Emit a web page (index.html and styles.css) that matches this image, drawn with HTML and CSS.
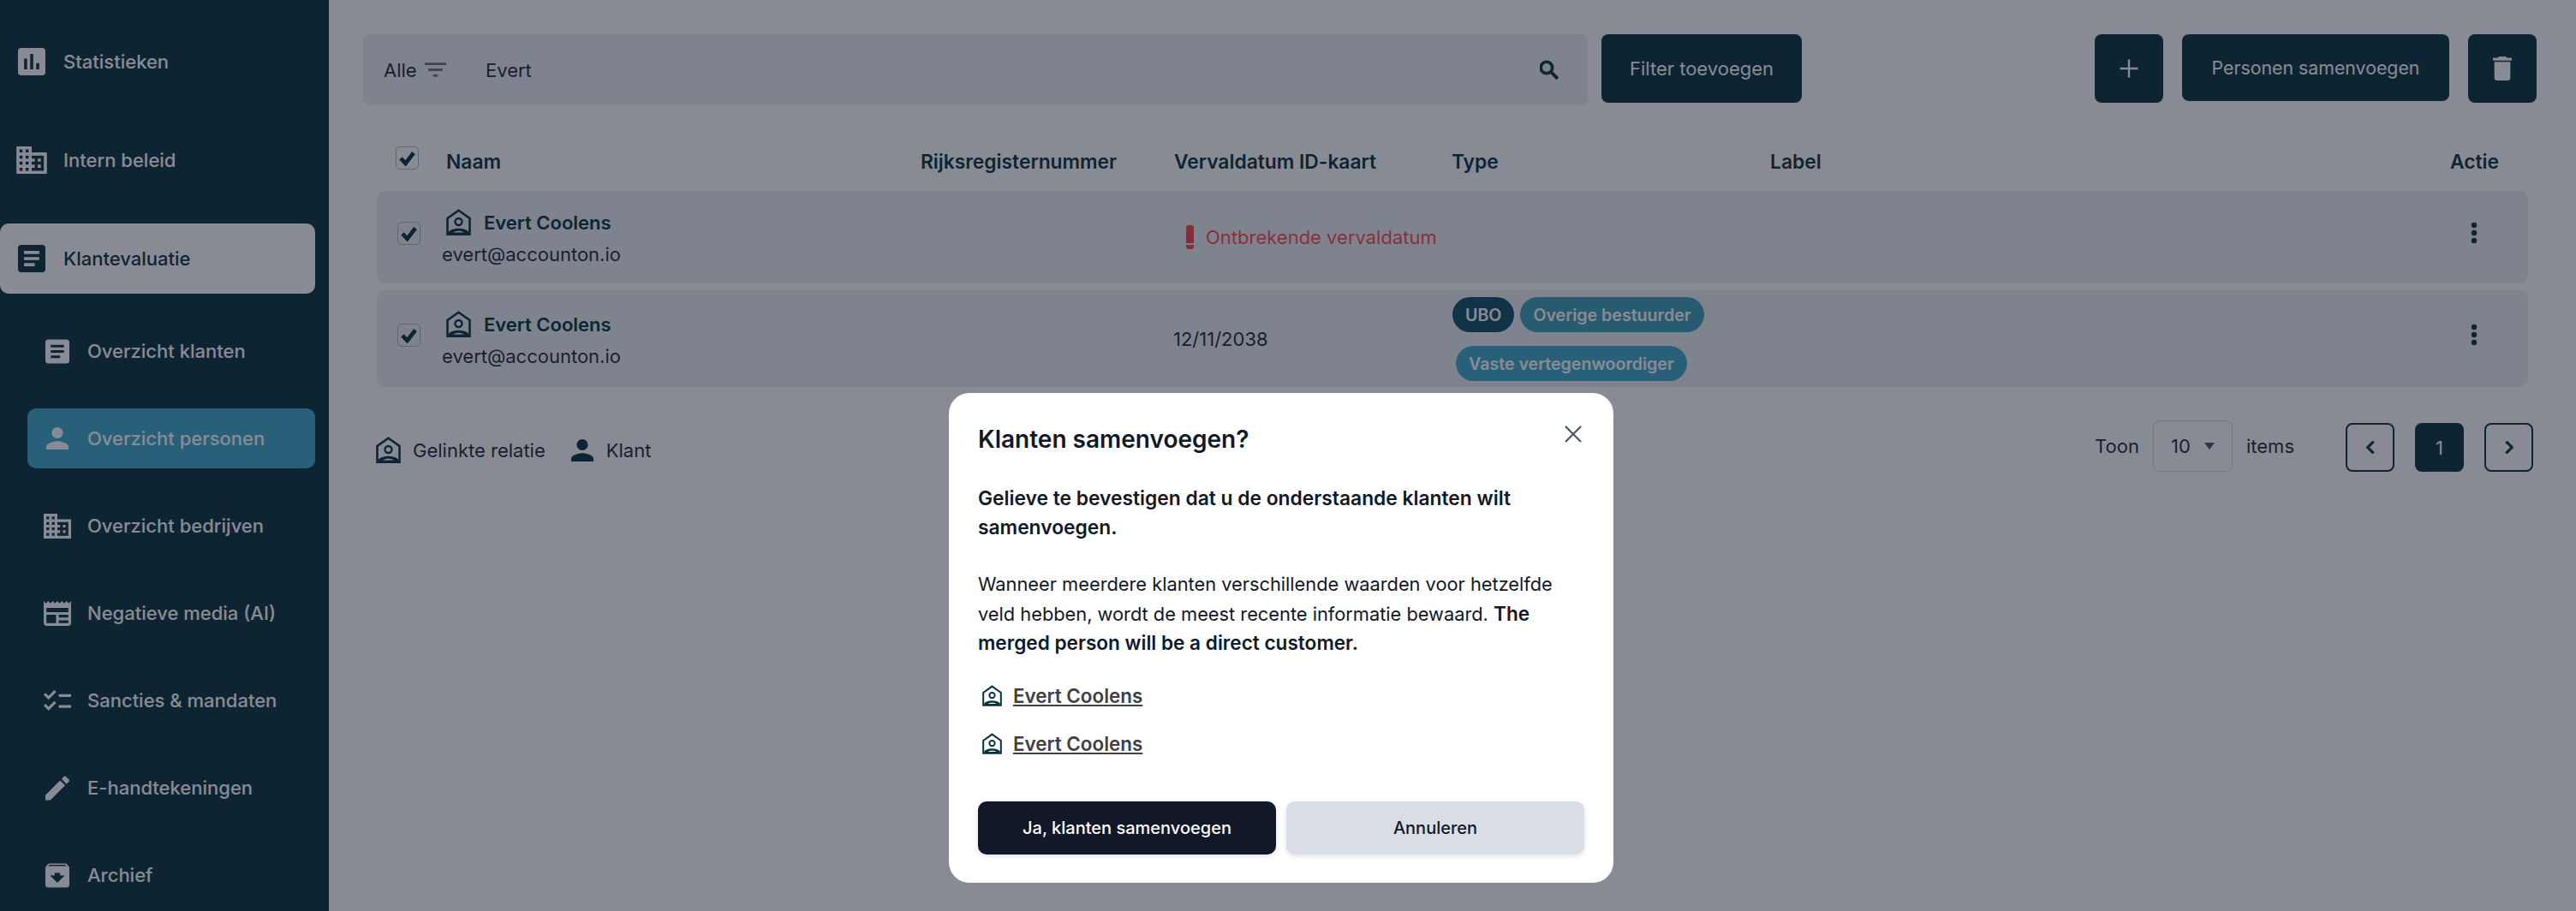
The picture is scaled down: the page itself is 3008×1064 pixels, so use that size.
FILE: index.html
```html
<!DOCTYPE html>
<html lang="nl">
<head>
<meta charset="utf-8">
<title>Overzicht personen</title>
<link rel="stylesheet" href="styles.css">
</head>
<body>
<svg class="defs" width="0" height="0" aria-hidden="true">
  <symbol id="i-linked" viewBox="0 0 29 31">
    <path d="M14.5 1.8 27.5 11V29.7H1.5V11Z" fill="none" stroke="currentColor" stroke-width="2.6" stroke-linejoin="miter"/>
    <circle cx="14.5" cy="15" r="4" fill="none" stroke="currentColor" stroke-width="2.4"/>
    <path fill-rule="evenodd" d="M3 30V26.5C7.5 21.5 21.500 21.500 26 26.500V30ZM8 27.500C11.500 25.200 17.500 25.200 21 27.500Z"/>
  </symbol>
  <symbol id="i-assess" viewBox="3 3 18 18"><path d="M19 3H5c-1.1 0-2 .9-2 2v14c0 1.1.9 2 2 2h14c1.1 0 2-.9 2-2V5c0-1.1-.9-2-2-2zM9 17H7v-7h2v7zm4 0h-2V7h2v10zm4 0h-2v-4h2v4z"/></symbol>
  <symbol id="i-domain" viewBox="2 3 20 18"><path d="M12 7V3H2v18h20V7H12zM6 19H4v-2h2v2zm0-4H4v-2h2v2zm0-4H4V9h2v2zm0-4H4V5h2v2zm4 12H8v-2h2v2zm0-4H8v-2h2v2zm0-4H8V9h2v2zm0-4H8V5h2v2zm10 12h-8v-2h2v-2h-2v-2h2v-2h-2V9h8v10zm-2-8h-2v2h2v-2zm0 4h-2v2h2v-2z"/></symbol>
  <symbol id="i-article" viewBox="3 3 18 18"><path d="M19 3H5c-1.1 0-2 .9-2 2v14c0 1.1.9 2 2 2h14c1.1 0 2-.9 2-2V5c0-1.1-.9-2-2-2zm-5 14H7v-2h7v2zm3-4H7v-2h10v2zm0-4H7V7h10v2z"/></symbol>
  <symbol id="i-person" viewBox="4 4 16 16"><path d="M12 12c2.21 0 4-1.79 4-4s-1.79-4-4-4-4 1.79-4 4 1.79 4 4 4zm0 2c-2.67 0-8 1.34-8 4v2h16v-2c0-2.66-5.33-4-8-4z"/></symbol>
  <symbol id="i-news" viewBox="2 3 20 18"><path d="M22 3l-1.67 1.67L18.67 3 17 4.67 15.33 3l-1.66 1.67L12 3l-1.67 1.67L8.67 3 7 4.67 5.33 3 3.67 4.67 2 3v16c0 1.1.9 2 2 2h16c1.1 0 2-.9 2-2V3zM11 19H4v-6h7v6zm9 0h-7v-2h7v2zm0-4h-7v-2h7v2zm0-4H4V8h16v3z"/></symbol>
  <symbol id="i-check" viewBox="2 4 20 15"><path d="M22 7h-9v2h9V7zm0 8h-9v2h9v-2zM5.54 11L2 7.46l1.41-1.41 2.12 2.12 4.24-4.24 1.41 1.41L5.54 11zm0 8L2 15.46l1.41-1.41 2.12 2.12 4.24-4.24 1.41 1.41L5.54 19z"/></symbol>
  <symbol id="i-edit" viewBox="3 3 18 18"><path d="M3 17.25V21h3.75L17.81 9.94l-3.75-3.75L3 17.25zM20.71 7.04c.39-.39.39-1.02 0-1.41l-2.34-2.34c-.39-.39-1.02-.39-1.41 0l-1.83 1.83 3.75 3.75 1.83-1.83z"/></symbol>
  <symbol id="i-archive" viewBox="3 3 18 18"><path d="M20.54 5.23l-1.39-1.68C18.88 3.21 18.47 3 18 3H6c-.47 0-.88.21-1.16.55L3.46 5.23C3.17 5.57 3 6.02 3 6.5V19c0 1.1.9 2 2 2h14c1.1 0 2-.9 2-2V6.5c0-.48-.17-.93-.46-1.27zM12 17.5L6.5 12H10v-2h4v2h3.5L12 17.5zM5.12 5l.81-1h12l.94 1H5.12z"/></symbol>
  <symbol id="i-tick" viewBox="0 0 24 24"><path d="M2.5 12.5 9.5 20 21.5 4.5" fill="none" stroke="currentColor" stroke-width="6"/></symbol>
  <symbol id="i-dots" viewBox="0 0 8 26"><circle cx="4" cy="4" r="3.2"/><circle cx="4" cy="13" r="3.2"/><circle cx="4" cy="22" r="3.2"/></symbol>
</svg>

<div class="app">
  <nav class="sidebar">
    <a class="top-item"><span class="ic-top"><svg class="ic-32"><use href="#i-assess"/></svg></span><span>Statistieken</span></a>
    <a class="top-item"><span class="ic-top"><svg class="ic-36"><use href="#i-domain"/></svg></span><span>Intern beleid</span></a>
    <a class="top-item is-open"><span class="ic-top"><svg class="ic-32"><use href="#i-article"/></svg></span><span>Klantevaluatie</span></a>
    <a class="sub-item"><span class="ic-sub"><svg class="ic-28"><use href="#i-article"/></svg></span><span>Overzicht klanten</span></a>
    <a class="sub-item is-active"><span class="ic-sub"><svg class="ic-person"><use href="#i-person"/></svg></span><span>Overzicht personen</span></a>
    <a class="sub-item"><span class="ic-sub"><svg class="ic-wide"><use href="#i-domain"/></svg></span><span>Overzicht bedrijven</span></a>
    <a class="sub-item"><span class="ic-sub"><svg class="ic-wide"><use href="#i-news"/></svg></span><span>Negatieve media (AI)</span></a>
    <a class="sub-item"><span class="ic-sub"><svg class="ic-list"><use href="#i-check"/></svg></span><span>Sancties &amp; mandaten</span></a>
    <a class="sub-item"><span class="ic-sub"><svg class="ic-28"><use href="#i-edit"/></svg></span><span>E-handtekeningen</span></a>
    <a class="sub-item"><span class="ic-sub"><svg class="ic-28"><use href="#i-archive"/></svg></span><span>Archief</span></a>
  </nav>

  <main class="main">
    <div class="toolbar">
      <div class="search">
        <span class="search-scope">Alle</span>
        <svg class="filter-ic" viewBox="3 6 18 12"><path d="M10 18h4v-2h-4v2zM3 6v2h18V6H3zm3 7h12v-2H6v2z"/></svg>
        <span class="search-value">Evert</span>
        <svg class="search-ic" viewBox="3 3 18 18"><path d="M15.5 14h-.79l-.28-.27C15.41 12.59 16 11.11 16 9.5 16 5.91 13.09 3 9.5 3S3 5.91 3 9.5 5.91 16 9.5 16c1.61 0 3.09-.59 4.23-1.57l.27.28v.79l5 4.99L20.49 19l-4.99-5zm-6 0C7.01 14 5 11.99 5 9.5S7.01 5 9.5 5 14 7.01 14 9.5 11.99 14 9.5 14z"/></svg>
      </div>
      <button class="btn btn-filter">Filter toevoegen</button>
      <button class="btn btn-icon btn-add"><svg class="plus-ic" viewBox="0 0 24 24"><path d="M12 1.500v21M1.500 12h21" fill="none" stroke="currentColor" stroke-width="2.4"/></svg></button>
      <button class="btn btn-merge">Personen samenvoegen</button>
      <button class="btn btn-icon btn-del"><svg class="trash-ic" viewBox="5 3 14 18"><path d="M6 19c0 1.1.9 2 2 2h8c1.1 0 2-.9 2-2V7H6v12zM19 4h-3.5l-1-1h-5l-1 1H5v2h14V4z"/></svg></button>
    </div>

    <div class="table-head">
      <span class="cb cb-head"><svg class="tick"><use href="#i-tick"/></svg></span>
      <span class="th th-name">Naam</span>
      <span class="th">Rijksregisternummer</span>
      <span class="th">Vervaldatum ID-kaart</span>
      <span class="th">Type</span>
      <span class="th">Label</span>
      <span class="th">Actie</span>
    </div>

    <div class="row row-a">
      <span class="cb cb-row"><svg class="tick"><use href="#i-tick"/></svg></span>
      <div class="who">
        <div class="who-name"><svg class="linked"><use href="#i-linked"/></svg><strong>Evert Coolens</strong></div>
        <div class="who-mail">evert@accounton.io</div>
      </div>
      <div></div>
      <div class="missing"><span class="bang"></span>Ontbrekende vervaldatum</div>
      <div></div>
      <div></div>
      <svg class="dots"><use href="#i-dots"/></svg>
    </div>

    <div class="row row-b">
      <span class="cb cb-row"><svg class="tick"><use href="#i-tick"/></svg></span>
      <div class="who">
        <div class="who-name"><svg class="linked"><use href="#i-linked"/></svg><strong>Evert Coolens</strong></div>
        <div class="who-mail">evert@accounton.io</div>
      </div>
      <div></div>
      <div class="date">12/11/2038</div>
      <div class="badges">
        <span class="badge b-ubo">UBO</span><span class="badge b-ob">Overige bestuurder</span>
        <span class="badge b-vv">Vaste vertegenwoordiger</span>
      </div>
      <div></div>
      <svg class="dots"><use href="#i-dots"/></svg>
    </div>

    <div class="foot">
      <div class="legend">
        <svg class="linked"><use href="#i-linked"/></svg><span class="legend-text">Gelinkte relatie</span>
        <svg class="legend-person"><use href="#i-person"/></svg><span>Klant</span>
      </div>
      <div class="pager">
        <span>Toon</span>
        <span class="select"><span>10</span><span class="caret"></span></span>
        <span class="items">items</span>
        <button class="pg pg-prev"><svg class="chev" viewBox="8 6 8 12"><path d="M15.41 7.41L14 6l-6 6 6 6 1.41-1.41L10.83 12z"/></svg></button>
        <button class="pg pg-cur">1</button>
        <button class="pg"><svg class="chev" viewBox="8 6 8 12"><path d="M8.59 16.59L10 18l6-6-6-6-1.41 1.41L13.17 12z"/></svg></button>
      </div>
    </div>
  </main>
</div>

<div class="overlay"></div>

<section class="modal">
  <header class="modal-head">
    <h2>Klanten samenvoegen?</h2>
    <svg class="close" viewBox="0 0 20 20"><path d="M1 1l18 18M19 1 1 19" fill="none" stroke="currentColor" stroke-width="2.2"/></svg>
  </header>
  <p class="lead">Gelieve te bevestigen dat u de onderstaande klanten wilt samenvoegen.</p>
  <p class="body-text">Wanneer meerdere klanten verschillende waarden voor hetzelfde veld hebben, wordt de meest recente informatie bewaard. <strong>The merged person will be a direct customer.</strong></p>
  <a class="link"><svg class="link-ic"><use href="#i-linked"/></svg><span>Evert Coolens</span></a>
  <a class="link"><svg class="link-ic"><use href="#i-linked"/></svg><span>Evert Coolens</span></a>
  <div class="actions">
    <button class="act act-yes">Ja, klanten samenvoegen</button>
    <button class="act act-no">Annuleren</button>
  </div>
</section>
</body>
</html>
```
FILE: styles.css
```css
* { box-sizing: border-box; }
html, body { margin: 0; height: 100%; overflow: hidden; }
body { font-family: Inter, "Liberation Sans", sans-serif; font-size: 22px; color: #1f2937; background: #fff; }
button { font: inherit; border: 0; padding: 0; }
svg { fill: currentColor; display: block; flex: none; }
.defs { position: absolute; }

.app { display: flex; height: 1064px; }

/* sidebar */
.sidebar { width: 384px; flex: none; background: #09323f; color: #fff; padding: 31px 16px 0 0; display: flex; flex-direction: column; overflow: hidden; font-weight: 500; }
.top-item { display: flex; align-items: center; flex: none; height: 82px; margin-bottom: 33px; border-radius: 0 10px 10px 0; font-size: 22px; }
.top-item.is-open { background: #fff; color: #09323f; border-radius: 10px; margin-bottom: 32px; }
.ic-top { width: 74px; display: flex; justify-content: center; }
.sub-item { display: flex; align-items: center; flex: none; height: 70px; margin: 0 0 32px 32px; border-radius: 10px; font-size: 22px; }
.sub-item.is-active { background: #3fa9cc; }
.ic-sub { width: 70px; display: flex; justify-content: center; }
.ic-32 { width: 32px; height: 32px; }
.ic-36 { width: 36px; height: 32px; }
.ic-28 { width: 28px; height: 29px; }
.ic-person { width: 26px; height: 26px; }
.ic-wide { width: 32px; height: 29px; }
.ic-list { width: 32px; height: 24px; }

/* main */
.main { flex: 1; min-width: 0; padding: 40px 46px 0 40px; color: #1f2937; }
.toolbar { display: flex; align-items: flex-start; height: 83px; }
.search { width: 1430px; height: 83px; background: #edeff4; border-radius: 8px; display: flex; align-items: center; padding: 0 34px 0 24px; margin-right: 16px; }
.search-scope { width: 48px; }
.filter-ic { width: 25px; height: 17px; color: #6b7280; margin-right: 46px; }
.search-value { flex: 1; }
.search-ic { width: 22px; height: 24px; color: #09323f; stroke: currentColor; stroke-width: 1; }
.btn { height: 80px; background: #09323f; color: #fff; border-radius: 8px; display: flex; align-items: center; justify-content: center; font-weight: 400; font-size: 22px; }
.btn-filter { width: 234px; margin-right: 342px; }
.btn-icon { width: 80px; }
.btn-add { margin-right: 22px; }
.btn-merge { width: 312px; height: 78px; margin-right: 22px; font-size: 21.3px; }
.plus-ic { width: 24px; height: 24px; }
.trash-ic { width: 22px; height: 28px; }

/* table */
.table-head, .row { display: grid; align-items: center; }
.table-head { margin: 39px 0 9px; padding-left: 38px; height: 52px; grid-template-columns: 59px 554px 296px 324px 372px 794px 1fr; }
.th { font-weight: 600; color: #09323f; font-size: 22.8px; }
.cb { width: 27px; height: 27px; border: 1px solid #b0b4bc; border-radius: 5px; color: #09323f; display: flex; align-items: center; justify-content: center; }
.cb-head { margin-bottom: 8px; }
.cb-row { margin-bottom: 10px; margin-left: -1px; }
.tick { width: 19px; height: 19px; }
.row { margin: 0 0 8px 16px; width: 2512px; background: #edeff4; border-radius: 10px; padding-left: 25px; grid-template-columns: 51px 559px 296px 324px 372px 794px 1fr; }
.row-a { min-height: 108px; }
.row-b { padding-top: 8px; padding-bottom: 7px; }
.who-name { display: flex; align-items: center; gap: 15px; margin-left: 5px; }
.who-name strong { font-weight: 600; color: #09323f; font-size: 22px; }
.linked { width: 29px; height: 31px; color: #09323f; }
.who-mail { margin-top: 9px; font-size: 22px; color: #1f2937; }
.missing { display: flex; align-items: center; color: #ff4a4f; margin-left: 14px; }
.bang { width: 9px; height: 28px; margin-right: 14px; background: linear-gradient(#ff4048 0 21px, transparent 21px 23px, #ff4048 23px); border-radius: 3px; }
.date { margin-left: -1px; }
.badges { display: flex; flex-wrap: wrap; align-items: flex-start; gap: 16px 7px; margin-left: 1px; width: 310px; }
.badge { height: 41px; border-radius: 21px; display: inline-flex; align-items: center; padding: 0 15px; font-size: 19.6px; font-weight: 600; color: #fff; white-space: nowrap; }
.b-ubo { background: #0f4f66; }
.b-ob { background: #3a9eb9; }
.b-vv { background: #3fa9cc; margin-left: 4px; }
.dots { width: 8px; height: 26px; color: #09323f; margin: 0 0 10px 24px; }

/* footer */
.foot { display: flex; justify-content: space-between; align-items: center; height: 60px; margin-top: 39px; margin-left: 15px; padding-right: 4px; }
.legend { display: flex; align-items: center; margin-top: 9px; }
.legend-text { margin: 0 30px 0 14px; }
.legend-person { width: 26px; height: 26px; color: #09323f; margin-right: 15px; }
.pager { display: flex; align-items: center; }
.select { width: 93px; height: 60px; margin: 0 16px; border: 1px solid #d1d5db; border-radius: 8px; display: flex; align-items: center; justify-content: space-between; padding: 0 20px; }
.caret { width: 0; height: 0; border: 6px solid transparent; border-top: 8px solid #4b5563; border-bottom: 0; }
.items { margin-right: 60px; }
.pg { width: 57px; height: 57px; margin-left: 24px; border: 2px solid #09323f; border-radius: 8px; background: transparent; color: #09323f; display: flex; align-items: center; justify-content: center; margin-top: 3px; }
.pg-prev { margin-left: 0; }
.pg-cur { background: #09323f; color: #fff; font-size: 22px; }
.chev { width: 10px; height: 15px; stroke: currentColor; stroke-width: .8; }

/* modal */
.overlay { position: fixed; inset: 0; background: rgba(17, 24, 39, .5); }
.modal { position: absolute; left: 1108px; top: 459px; width: 776px; height: 572px; background: #fff; border-radius: 24px; padding: 34px 34px 0; color: #111827; }
.modal-head { display: flex; justify-content: space-between; height: 47px; align-items: flex-start; }
.modal-head h2 { margin: 0; font-size: 28px; line-height: 40px; font-weight: 600; color: #111827; }
.close { width: 20px; height: 20px; margin: 4px 3px 0 0; color: #4b5563; }
.lead { margin: 25px 0 34px; font-size: 22.8px; line-height: 33.5px; font-weight: 600; }
.body-text { margin: 0 0 30px; font-size: 21.8px; line-height: 33.7px; }
.body-text strong { font-weight: 600; font-size: 22.6px; }
.link { display: flex; align-items: center; height: 26px; margin: 0 0 30px 5px; color: #3f3f46; font-weight: 600; font-size: 22.4px; text-decoration: underline; }
.link-ic { width: 23px; height: 25px; margin-right: 13px; color: #09323f; }
.actions { display: flex; gap: 12px; margin-top: 55px; }
.act { width: 348px; height: 62px; border-radius: 10px; font-size: 20px; font-weight: 500; box-shadow: 0 2px 6px rgba(0, 0, 0, .12); }
.act-yes { background: #111827; color: #fff; }
.act-no { background: #d9dde6; color: #111827; }
```
